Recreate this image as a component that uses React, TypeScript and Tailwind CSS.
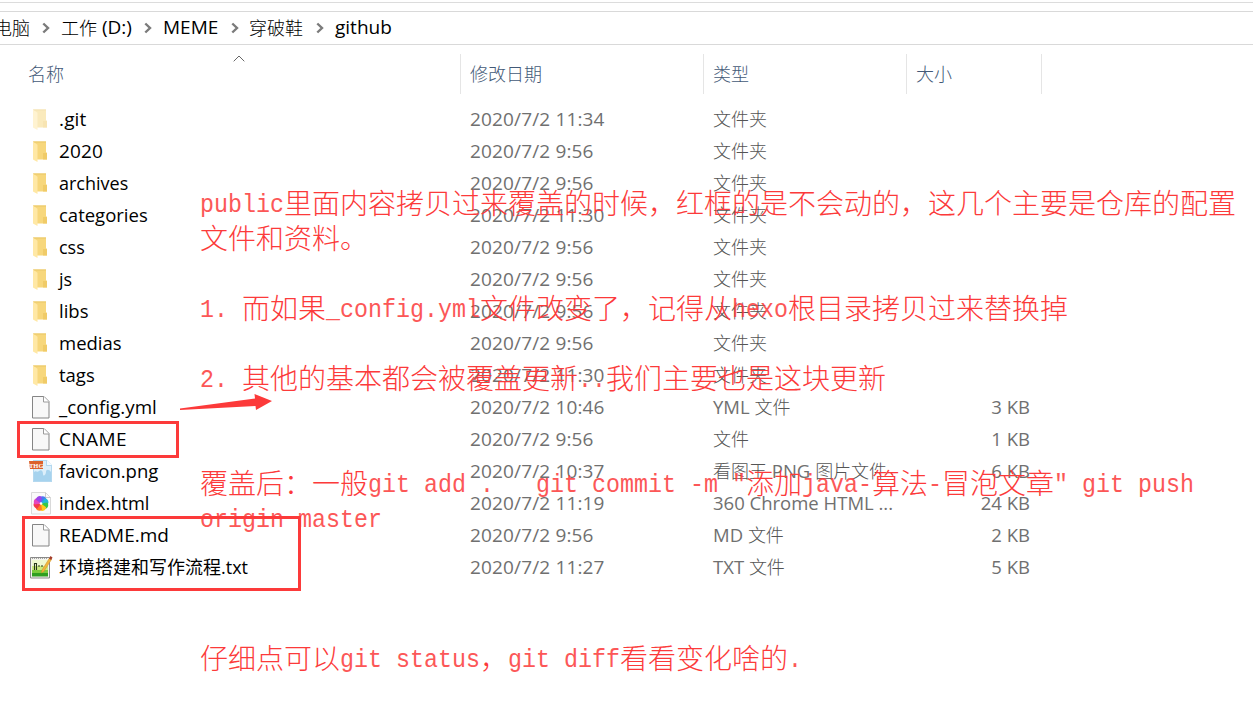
import React from "react";

type Kind = "faded" | "folder" | "file" | "png" | "html" | "txt";
type Row = { name: string; kind: Kind; date: string; type: string; size?: string; nameClass?: string };

const wide = "text-[19px] tracking-[0.15px]";

const rows: Row[] = [
  { name: ".git", kind: "faded", date: "2020/7/2 11:34", type: "文件夹", nameClass: wide },
  { name: "2020", kind: "folder", date: "2020/7/2 9:56", type: "文件夹", nameClass: wide },
  { name: "archives", kind: "folder", date: "2020/7/2 9:56", type: "文件夹", nameClass: "text-[18px]" },
  { name: "categories", kind: "folder", date: "2020/7/2 11:30", type: "文件夹" },
  { name: "css", kind: "folder", date: "2020/7/2 9:56", type: "文件夹", nameClass: "text-[18px]" },
  { name: "js", kind: "folder", date: "2020/7/2 9:56", type: "文件夹", nameClass: "text-[18px]" },
  { name: "libs", kind: "folder", date: "2020/7/2 9:56", type: "文件夹" },
  { name: "medias", kind: "folder", date: "2020/7/2 9:56", type: "文件夹" },
  { name: "tags", kind: "folder", date: "2020/7/2 11:30", type: "文件夹" },
  { name: "_config.yml", kind: "file", date: "2020/7/2 10:46", type: "YML 文件", size: "3 KB", nameClass: "text-[18.8px]" },
  { name: "CNAME", kind: "file", date: "2020/7/2 9:56", type: "文件", size: "1 KB", nameClass: "text-[19px] tracking-[0.4px]" },
  { name: "favicon.png", kind: "png", date: "2020/7/2 10:37", type: "看图王 PNG 图片文件", size: "6 KB" },
  { name: "index.html", kind: "html", date: "2020/7/2 11:19", type: "360 Chrome HTML ...", size: "24 KB", nameClass: "text-[18.2px]" },
  { name: "README.md", kind: "file", date: "2020/7/2 9:56", type: "MD 文件", size: "2 KB", nameClass: "text-[19px]" },
  { name: "环境搭建和写作流程.txt", kind: "txt", date: "2020/7/2 11:27", type: "TXT 文件", size: "5 KB", nameClass: "text-[18px]" },
];

const notes = [
  "public里面内容拷贝过来覆盖的时候，红框的是不会动的，这几个主要是仓库的配置",
  "文件和资料。",
  "",
  "1. 而如果_config.yml文件改变了，记得从hexo根目录拷贝过来替换掉",
  "",
  "2. 其他的基本都会被覆盖更新..我们主要也是这块更新",
  "",
  "",
  '覆盖后：一般git add .   git commit -m "添加java-算法-冒泡文章" git push',
  "origin master",
  "",
  "",
  "",
  "仔细点可以git status，git diff看看变化啥的.",
];

/* Splits a string into Latin and CJK runs so that each gets its own font and size. */
function Runs({ text, latin, cjk }: { text: string; latin: string; cjk: string }) {
  const parts = text.match(/[\x00-\x7f]+|[^\x00-\x7f]+/g) ?? [];
  return (
    <>
      {parts.map((p, i) => (
        <span key={i} className={p.charCodeAt(0) < 128 ? latin : cjk}>
          {p}
        </span>
      ))}
    </>
  );
}

const uiCjk = "font-['Noto_Sans_CJK_SC',sans-serif] text-[18px] font-light";
const uiLatin = "font-['Open_Sans','Noto_Sans',sans-serif]";

function Page() {
  return (
    <>
      <path d="M3.5 1.5H15l5 5v16.5H3.5z" fill="#f8f8f8" stroke="#858585" />
      <path d="M14.5 1.5v5.5H20" fill="#fff" stroke="#9a9a9a" />
    </>
  );
}

const petals = ["#4b78f0", "#23b8d8", "#36c748", "#ffca1c", "#ff7b25", "#f5384c", "#e547c0", "#9b45e8"];

function FileIcon({ kind }: { kind: Kind }) {
  return (
    <svg viewBox="0 0 24 24" className="h-6 w-6 shrink-0" fill="none">
      {(kind === "folder" || kind === "faded") && (
        <g opacity={kind === "faded" ? 0.5 : 1}>
          <path d="M4 2.500h13v11h1V20.500H7L4 18z" fill="#f7d77c" />
          <path d="M14 14h4v6.500h-4z" fill="#f0cb68" />
          <path d="M4 2.500l4.500 3.200V23L4 20.500z" fill="#ffe8a5" />
          <path d="M4 2.500h13v1H5.500z" fill="#e9c768" />
        </g>
      )}
      {kind === "file" && <Page />}
      {kind === "png" && (
        <>
          <path d="M4 1h14l5 5v17H4z" fill="#b4d8ef" />
          <path d="M5 2h12v5h5v13H5z" fill="#dceffa" />
          <path d="M5 13c2-2 3 1 5-1s4 0 4 3 3 1 3-2 3-3 5 0v9H5z" fill="#a6d3ee" />
          <path d="M18 1v5h5z" fill="#f4fbff" />
          <path d="M0 2h14v8H1z" fill="#dc612b" />
          <text x="7.200" y="8.600" textAnchor="middle" fontSize="6.500" fontWeight="700" fontFamily="Liberation Serif" fill="#fff">
            THG
          </text>
        </>
      )}
      {kind === "html" && (
        <>
          <path d="M2.500 1.500h14l5 5V23h-19z" fill="#fafafa" stroke="#d9d9d9" />
          <path d="M16.500 1.500v5h5" stroke="#ccc" />
          {petals.map((c, i) => (
            <path key={c} d="M12 12.500 11 6.200C13.500 4.300 17 5.600 17.300 8.200z" fill={c} transform={`rotate(${i * 45} 12 12.500)`} />
          ))}
          <circle cx="12" cy="12.500" r="1.300" fill="#fff" />
        </>
      )}
      {kind === "txt" && (
        <>
          <path d="M1.500 2.500h19v20.500h-19z" fill="#f4f4ee" stroke="#8a8a8a" />
          <path d="M3 5h16v7H3z" fill="#eff8cf" />
          <path d="M3 11h16v4H3z" fill="#c9ea7c" />
          <path d="M3 15h16v3H3z" fill="#7bcb3c" />
          <path d="M3 18h16v3.500H3z" fill="#2f9f20" />
          <path d="M3 3h16" stroke="#888" strokeWidth="1.300" strokeDasharray="1 1" />
          <path d="M5.500 15V8.500h2V15M9 11h2M12 11h2" stroke="#283819" strokeWidth="1.100" />
          <path d="M20.500 3 13 15l-.5 3 2.500-1.800L22.500 4.500z" fill="#f2b63b" stroke="#c98a25" strokeWidth=".5" />
          <path d="M20 3.500 21.500 1l2 1.500-1.300 2.500z" fill="#a33d2c" />
        </>
      )}
    </svg>
  );
}

function Chevron() {
  return (
    <svg viewBox="0 0 8 12" className="h-3 w-2 shrink-0" fill="none">
      <path d="M1.300 1.500 6 6 1.300 10.500" stroke="#7b7b7b" strokeWidth="2.400" />
    </svg>
  );
}

function Crumb({ text, box }: { text: string; box: string }) {
  return (
    <span className={`flex h-8 shrink-0 whitespace-pre leading-[30px] ${box}`}>
      <Runs
        text={text}
        latin="font-['Open_Sans','Noto_Sans',sans-serif] text-[19px]"
        cjk="font-['Noto_Sans_CJK_SC',sans-serif] text-[18px] font-light"
      />
    </span>
  );
}

export default function App() {
  return (
    <div className="relative h-[703px] w-[1253px] overflow-hidden bg-white text-black">
      <div className="h-[3px] border-b border-[#dcdcdc]" />
      <div className="h-[9px] border-b border-[#d9d9d9]" />
      <nav className="flex h-[33px] items-center border-b border-[#d9d9d9]">
        <Crumb text="电脑" box="-ml-[6px] w-[48px]" />
        <Chevron />
        <Crumb text="工作 (D:)" box="ml-[11px] w-[83px]" />
        <Chevron />
        <Crumb text="MEME" box="ml-[11px] w-[68px]" />
        <Chevron />
        <Crumb text="穿破鞋" box="ml-[10px] w-[67px]" />
        <Chevron />
        <Crumb text="github" box="ml-[11px]" />
      </nav>

      <header className={`mt-[9px] flex h-10 items-center text-[#435977] ${uiCjk}`}>
        <div className="relative h-10 w-[461px] border-r border-[#e5e5e5] pl-7 leading-[39px]">
          名称
          <svg viewBox="0 0 12 7" className="absolute left-[233px] top-[1px] h-[7px] w-3" fill="none">
            <path d="M.7 6.300 6 1l5.300 5.300" stroke="#666" />
          </svg>
        </div>
        <div className="h-10 w-[243px] border-r border-[#e5e5e5] pl-[9px] leading-[39px]">修改日期</div>
        <div className="h-10 w-[203px] border-r border-[#e5e5e5] pl-[9px] leading-[39px]">类型</div>
        <div className="h-10 w-[135px] border-r border-[#e5e5e5] pl-[9px] leading-[39px]">大小</div>
      </header>

      <main className="mt-[9px]">
        {rows.map((r) => (
          <div key={r.name} className="flex h-8 items-center whitespace-pre leading-8 text-[#707070]">
            <div className="flex w-[470px] items-center pl-[29px] text-black">
              <FileIcon kind={r.kind} />
              <span className={`ml-[6px] flex h-8 ${r.nameClass ?? "text-[18.5px]"}`}>
                <Runs
                  text={r.name}
                  latin="font-['Open_Sans','Noto_Sans',sans-serif]"
                  cjk="font-['Noto_Sans_CJK_SC',sans-serif] leading-[30px]"
                />
              </span>
            </div>
            <div className={`w-[243px] text-[19px] tracking-[0.15px] ${uiLatin}`}>{r.date}</div>
            <div className="flex h-8 w-[203px]">
              <Runs
                text={r.type}
                latin="font-['Open_Sans','Noto_Sans',sans-serif] text-[18.5px]"
                cjk="font-['Noto_Sans_CJK_SC',sans-serif] text-[18px] font-light leading-[30px] text-[#555]"
              />
            </div>
            <div className={`w-[114px] text-right text-[18.5px] ${uiLatin}`}>{r.size}</div>
          </div>
        ))}
      </main>

      <div className="absolute left-[17px] top-[421px] h-[37px] w-[162px] border-3 border-[#fc3a3a]" />
      <div className="absolute left-[22px] top-[516px] h-[75px] w-[279px] border-3 border-[#fc3a3a]" />
      <svg viewBox="0 0 94 18" className="absolute left-[179px] top-[393px] h-[18px] w-[94px]">
        <path d="M1 15.500 76 5.500 75.500 1 93 8 77 17 76.500 13 1 17z" fill="#fc3a3a" />
      </svg>

      <div className="absolute left-[200px] top-[187px] whitespace-pre text-[#fc3a3a]">
        {notes.map((line, i) => (
          <div key={i} className="flex h-[35px]">
            <Runs
              text={line}
              latin="font-['Liberation_Mono',monospace] text-[23.33px] leading-[36px] opacity-85 scale-y-110"
              cjk="font-['Noto_Sans_CJK_SC',sans-serif] text-[28px] font-light leading-[30px]"
            />
          </div>
        ))}
      </div>
    </div>
  );
}
